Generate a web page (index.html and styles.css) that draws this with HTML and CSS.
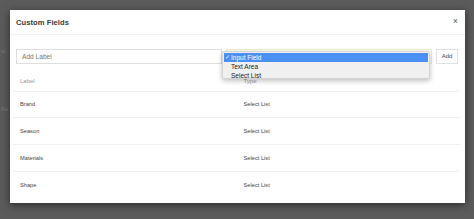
FILE: index.html
```html
<!DOCTYPE html>
<html>
<head>
<meta charset="utf-8">
<link rel="stylesheet" href="styles.css">
</head>
<body>
<div class="page">
  <div class="page-line l1">st</div>
  <div class="page-line l2">Ra</div>
</div>
<div class="modal">
  <div class="modal-header">
    <span class="title">Custom Fields</span>
    <span class="close">×</span>
  </div>
  <div class="form-row">
    <div class="input">Add Label</div>
    <div class="select"></div>
    <div class="btn">Add</div>
  </div>
  <table class="fields">
    <thead>
      <tr><th>Label</th><th>Type</th></tr>
    </thead>
    <tbody>
      <tr><td>Brand</td><td>Select List</td></tr>
      <tr><td>Season</td><td>Select List</td></tr>
      <tr><td>Materials</td><td>Select List</td></tr>
      <tr><td>Shape</td><td>Select List</td></tr>
    </tbody>
  </table>
  <div class="dropdown">
    <div class="opt active"><span class="check">✓</span>Input Field</div>
    <div class="opt">Text Area</div>
    <div class="opt">Select List</div>
  </div>
</div>
</body>
</html>
```
FILE: styles.css
```css
html, body {
  margin: 0;
  padding: 0;
}
body {
  width: 474px;
  height: 219px;
  background: #5b5b5b;
  font-family: "Liberation Sans", Arial, sans-serif;
  overflow: hidden;
  position: relative;
}
.page {
  padding-top: 48px;
  padding-left: 1px;
  font-size: 5.5px;
  color: #767676;
}
.l2 {
  margin-top: 52px;
}
.modal {
  position: absolute;
  left: 10px;
  top: 10px;
  width: 455px;
  height: 193px;
  background: #fff;
  box-shadow: 0 2px 8px rgba(0, 0, 0, 0.55);
}
.modal-header {
  height: 25px;
  border-bottom: 1px solid #f0f0f0;
  display: flex;
  align-items: center;
  justify-content: space-between;
  padding: 0 7px 0 6px;
  box-sizing: border-box;
}
.title {
  font-size: 7.6px;
  font-weight: bold;
  color: #3a3a3a;
  letter-spacing: 0.05px;
}
.close {
  font-size: 9px;
  color: #555;
  margin-top: -2px;
}
.form-row {
  display: flex;
  gap: 4px;
  margin-top: 14px;
  padding: 0 7px 0 6px;
}
.input {
  width: 206px;
  height: 15px;
  box-sizing: border-box;
  border: 1px solid #dedede;
  font-size: 6.6px;
  color: #777;
  padding-left: 5px;
  line-height: 13px;
}
.select {
  width: 206px;
  height: 15px;
  box-sizing: border-box;
  border: 1px solid #eeeec4;
  background: #fff;
}
.btn {
  width: 22px;
  height: 15px;
  box-sizing: border-box;
  border: 1px solid #e0e0e0;
  font-size: 6px;
  color: #444;
  text-align: center;
  line-height: 13px;
}
.fields {
  margin: 6px 5px 0 3px;
  width: 447px;
  border-collapse: collapse;
  font-size: 5.7px;
}
.fields th {
  text-align: left;
  font-weight: normal;
  color: #999;
  font-size: 6px;
  height: 21px;
  padding: 2px 7px 0;
  border-bottom: 1.5px solid #efefef;
  width: 50%;
  box-sizing: border-box;
}
.fields td {
  height: 26.7px;
  padding: 0 7px;
  color: #444;
  border-bottom: 1.5px solid #efefef;
  box-sizing: border-box;
}
.fields tbody tr:last-child td {
  border-bottom: none;
}
.dropdown {
  position: absolute;
  left: 212px;
  top: 41px;
  width: 208px;
  height: 28px;
  box-sizing: border-box;
  background: #f0f0f0;
  border: 1px solid #d4d4d4;
  border-radius: 2px;
  box-shadow: 0 2px 5px rgba(0, 0, 0, 0.25);
  padding-top: 0.5px;
  font-size: 6.5px;
  color: #222;
}
.opt {
  height: 9px;
  line-height: 9px;
  padding-left: 8px;
  position: relative;
}
.opt.active {
  background: #4a8ff2;
  color: #fff;
  margin: 0 1px;
  padding-left: 7px;
}
.check {
  position: absolute;
  left: 1px;
  top: 0;
  font-size: 5.5px;
}
```
